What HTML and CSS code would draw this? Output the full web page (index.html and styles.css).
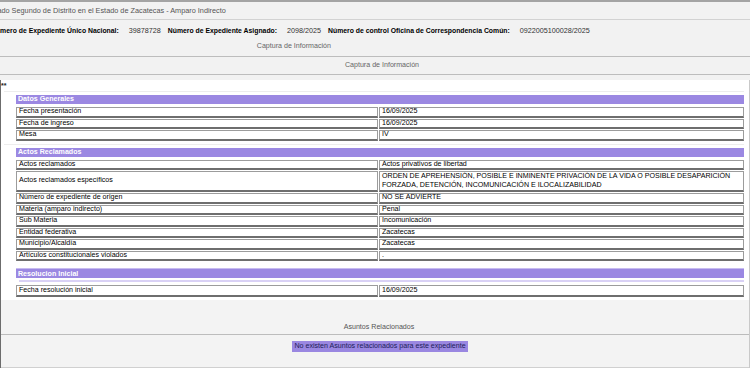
FILE: index.html
```html
<!DOCTYPE html>
<html lang="es">
<head>
<meta charset="utf-8">
<title>Captura de Información</title>
<link rel="stylesheet" href="styles.css">
</head>
<body>
<div class="page">
  <header class="top">
    <div class="court">Juzgado Segundo de Distrito en el Estado de Zacatecas - Amparo Indirecto</div>
    <div class="ids">
      <div class="ids-box">
        <div class="ids-line"><b>Número de Expediente Único Nacional:</b><span>39878728</span><b>Número de Expediente Asignado:</b><span>2098/2025</span><b>Número de control Oficina de Correspondencia Común:</b><span>0922005100028/2025</span></div>
        <div class="ids-caption">Captura de Información</div>
      </div>
    </div>
    <div class="capture">Captura de Información</div>
  </header>

  <main class="main">
    <div class="stars">**</div>

    <section class="sec sec-rule">
      <h2 class="bar">Datos Generales</h2>
      <div class="grid">
        <div class="cell">Fecha presentación</div><div class="cell">16/09/2025</div>
        <div class="cell">Fecha de ingreso</div><div class="cell">16/09/2025</div>
        <div class="cell">Mesa</div><div class="cell">IV</div>
      </div>
    </section>

    <section class="sec sec-rule sec-2">
      <h2 class="bar">Actos Reclamados</h2>
      <div class="grid">
        <div class="cell">Actos reclamados</div><div class="cell">Actos privativos de libertad</div>
        <div class="cell cell-mid">Actos reclamados específicos</div><div class="cell cell-two">ORDEN DE APREHENSIÓN, POSIBLE E INMINENTE PRIVACIÓN DE LA VIDA O POSIBLE DESAPARICIÓN FORZADA, DETENCIÓN, INCOMUNICACIÓN E ILOCALIZABILIDAD</div>
        <div class="cell">Número de expediente de origen</div><div class="cell">NO SE ADVIERTE</div>
        <div class="cell">Materia (amparo indirecto)</div><div class="cell">Penal</div>
        <div class="cell">Sub Materia</div><div class="cell">Incomunicación</div>
        <div class="cell">Entidad federativa</div><div class="cell">Zacatecas</div>
        <div class="cell">Municipio/Alcaldía</div><div class="cell">Zacatecas</div>
        <div class="cell">Artículos constitucionales violados</div><div class="cell">.</div>
      </div>
    </section>

    <section class="sec sec-3">
      <h2 class="bar bar-tall">Resolucion Inicial</h2>
      <div class="lav-rule"></div>
      <div class="grid">
        <div class="cell cell-tall">Fecha resolución inicial</div><div class="cell cell-tall">16/09/2025</div>
      </div>
    </section>
  </main>

  <footer class="related">
    <div class="related-title">Asuntos Relacionados</div>
    <div class="related-body"><span class="none">No existen Asuntos relacionados para este expediente</span></div>
  </footer>
</div>
</body>
</html>
```

FILE: styles.css
```css
* { box-sizing: border-box; }

html, body {
  margin: 0;
  padding: 0;
}

body {
  width: 750px;
  height: 368px;
  overflow: hidden;
  font-family: "Liberation Sans", Arial, Helvetica, sans-serif;
  font-size: 7.1px;
  color: #111;
  background: #f3f3f3;
}

.page {
  width: 750px;
  height: 368px;
  display: flex;
  flex-direction: column;
}

/* ---------- header ---------- */
.top {
  background: #f2f2f2;
  border-top: 2px solid #a4a4a4;
  padding-bottom: 5px;
}

.court {
  height: 18px;
  line-height: 17px;
  margin-left: -18px;
  font-size: 7.3px;
  color: #555;
  border-bottom: 1px solid #d2d2d2;
  white-space: nowrap;
}

.ids {
  height: 37px;
  padding-top: 6px;
  border-bottom: 1px solid #bdbdbd;
  overflow: hidden;
}

.ids-box {
  display: inline-flex;
  flex-direction: column;
  align-items: center;
  margin-left: -9px;
}

.ids-line {
  line-height: 10px;
  white-space: nowrap;
  color: #333;
  font-size: 7.2px;
}

.ids-line b {
  font-weight: bold;
  font-size: 6.85px;
  color: #000;
  margin-right: 10px;
}

.ids-line span {
  margin-right: 7px;
}

.ids-caption {
  margin-top: 5px;
  line-height: 10px;
  color: #666;
}

.capture {
  height: 18px;
  line-height: 17px;
  text-align: center;
  padding-left: 14px;
  color: #666;
  border-bottom: 1px solid #bdbdbd;
}

/* ---------- main ---------- */
.main {
  background: #fff;
  border-left: 1px solid #6c6c6c;
  border-right: 1px solid #c9c9c9;
  padding: 0 5px 3px 15px;
}

.stars {
  height: 11px;
  line-height: 11px;
  margin-left: -15px;
  font-weight: bold;
  font-size: 7px;
  color: #222;
}

.sec-rule {
  border-top: 1px solid #ededed;
  margin-left: -12px;
  padding-left: 12px;
  padding-top: 3px;
}

.sec-2 {
  margin-top: 3px;
}

.sec-3 {
  margin-top: 7px;
}

.bar {
  margin: 0 0 3px;
  height: 9px;
  line-height: 9px;
  padding-left: 2px;
  font-size: 7.1px;
  font-weight: bold;
  color: #fff;
  background: #9b88e2;
}

.bar-tall {
  height: 10px;
  line-height: 10px;
  margin-bottom: 2px;
  border-top: 1px solid #c7bbf0;
}

.lav-rule {
  height: 2px;
  margin: 0 0 3px 3px;
  background: #d9d1f5;
}

.grid {
  display: grid;
  grid-template-columns: 362px 1fr;
  column-gap: 1px;
  row-gap: 1px;
}

.cell {
  line-height: 7.5px;
  padding: 0 2px;
  background: #fff;
  color: #000;
  border: 1px solid #9c9c9c;
  border-bottom: 2px solid #6e6e6e;
  white-space: nowrap;
  overflow: hidden;
}

.cell-mid {
  display: flex;
  align-items: center;
}

.cell-two {
  line-height: 9px;
  white-space: normal;
}

.cell-tall {
  line-height: 9.3px;
}

/* ---------- related ---------- */
.related {
  flex: 1;
  background: #f3f3f3;
  border-left: 1px solid #6c6c6c;
  border-right: 1px solid #c9c9c9;
  display: flex;
  flex-direction: column;
}

.related-title {
  padding-top: 22px;
  height: 35px;
  line-height: 10px;
  text-align: center;
  padding-left: 8px;
  color: #555;
  border-bottom: 1px solid #bcbcbc;
}

.related-body {
  flex: 1;
  padding-top: 6px;
  padding-left: 10px;
  text-align: center;
  border-bottom: 1px solid #d0d0d0;
}

.none {
  display: inline-block;
  line-height: 11px;
  padding: 0 2px;
  background: #9a87e1;
  color: #1d1d5a;
}
```
